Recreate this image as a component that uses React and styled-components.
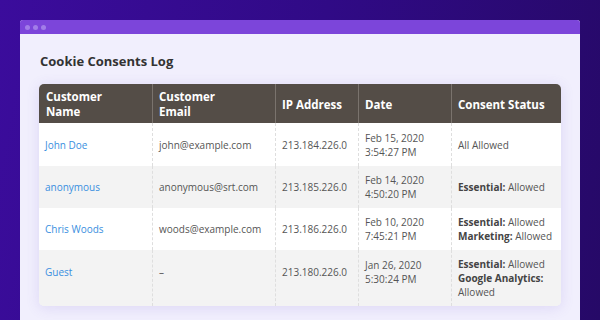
import React from "react";
import styled, { createGlobalStyle } from "styled-components";

const GlobalStyle = createGlobalStyle`
  html, body {
    margin: 0;
    padding: 0;
  }

  body {
    font-family: "Open Sans", "Liberation Sans", sans-serif;
    background: #2c0a7c;
  }
`;

const logs = [
  {
    name: "John Doe",
    email: "john@example.com",
    ip: "213.184.226.0",
    date: ["Feb 15, 2020", "3:54:27 PM"],
    status: [{ text: "All Allowed" }],
  },
  {
    name: "anonymous",
    email: "anonymous@srt.com",
    ip: "213.185.226.0",
    date: ["Feb 14, 2020", "4:50:20 PM"],
    status: [{ label: "Essential:", text: "Allowed" }],
  },
  {
    name: "Chris Woods",
    email: "woods@example.com",
    ip: "213.186.226.0",
    date: ["Feb 10, 2020", "7:45:21 PM"],
    status: [
      { label: "Essential:", text: "Allowed" },
      { label: "Marketing:", text: "Allowed" },
    ],
  },
  {
    name: "Guest",
    email: "–",
    ip: "213.180.226.0",
    date: ["Jan 26, 2020", "5:30:24 PM"],
    status: [
      { label: "Essential:", text: "Allowed" },
      { label: "Google Analytics:", text: "Allowed", wrap: true },
    ],
    tail: true,
  },
];

export default function App() {
  return (
    <>
      <GlobalStyle />
      <Page>
        <Window>
          <TitleBar>
            <Dot />
            <Dot />
            <Dot />
          </TitleBar>
          <Content>
            <Heading>Cookie Consents Log</Heading>
            <Table>
              <HeadRow>
                <HeadCell>Customer<br />Name</HeadCell>
                <HeadCell>Customer<br />Email</HeadCell>
                <HeadCell>IP Address</HeadCell>
                <HeadCell>Date</HeadCell>
                <HeadCell>Consent Status</HeadCell>
              </HeadRow>
              {logs.map((log, i) => (
                <Row key={log.ip} $striped={i % 2 === 1} $first={i === 0}>
                  <Cell $tail={log.tail}><Link>{log.name}</Link></Cell>
                  <Cell $tail={log.tail}>{log.email}</Cell>
                  <Cell $tail={log.tail}>{log.ip}</Cell>
                  <Cell $tail={log.tail} $lift={log.tail}>
                    {log.date[0]}<br />{log.date[1]}
                  </Cell>
                  <Cell>
                    {log.status.map((s, j) => (
                      <div key={j}>
                        {s.label && <Strong>{s.label}</Strong>}
                        {s.wrap ? <br /> : s.label ? " " : ""}
                        {s.text}
                      </div>
                    ))}
                  </Cell>
                </Row>
              ))}
            </Table>
          </Content>
        </Window>
      </Page>
    </>
  );
}

const Page = styled.div`
  width: 600px;
  height: 320px;
  overflow: hidden;
  padding: 20px 20px 0;
  box-sizing: border-box;
  background: linear-gradient(100deg, #3b0c9c 0%, #300a86 50%, #260967 100%);
`;

const Window = styled.div`
  height: 320px;
  background: #f1effd;
  border-radius: 3px 3px 0 0;
  overflow: hidden;
`;

const TitleBar = styled.div`
  height: 14px;
  background: #7c45da;
  display: flex;
  align-items: center;
  gap: 3px;
  padding-left: 5px;
`;

const Dot = styled.span`
  width: 5px;
  height: 5px;
  border-radius: 50%;
  background: #a27de8;
`;

const Content = styled.div`
  padding: 19px 19px 0;
`;

const Heading = styled.h1`
  margin: 0 0 15px 1px;
  font-size: 13px;
  line-height: 16px;
  font-weight: 700;
  color: #333;
`;

const Table = styled.div`
  border-radius: 5px;
  overflow: hidden;
  background: #f3f3f3;
  box-shadow: 0 2px 14px rgba(96, 74, 200, 0.14);
`;

const columns = "113px 123px 83px 93px 1fr";

const HeadRow = styled.div`
  display: grid;
  grid-template-columns: ${columns};
  background: #544d47;
`;

const HeadCell = styled.div`
  display: flex;
  align-items: center;
  padding: 5px 6px 4px 7px;
  font-size: 11.5px;
  line-height: 15px;
  font-weight: 700;
  color: #fff;

  & + & {
    border-left: 1px solid #7a736d;
    padding-left: 6px;
  }
`;

const Row = styled.div`
  display: grid;
  grid-template-columns: ${columns};
  min-height: ${props => props.$first ? "43px" : "42px"};
  background: ${props => props.$striped ? "#f3f3f3" : "#fff"};
`;

const Cell = styled.div`
  display: flex;
  flex-direction: column;
  justify-content: center;
  padding: ${props => props.$tail ? (props.$lift ? "7px 6px 20px" : "7px 6px 19px") : "7px 6px"};
  font-size: 10px;
  line-height: 14px;
  color: #555;

  & + & {
    border-left: 1px dashed #dedede;
  }
`;

const Link = styled.span`
  color: #3a8fe0;
`;

const Strong = styled.b`
  font-weight: 700;
  color: #444;
`;
